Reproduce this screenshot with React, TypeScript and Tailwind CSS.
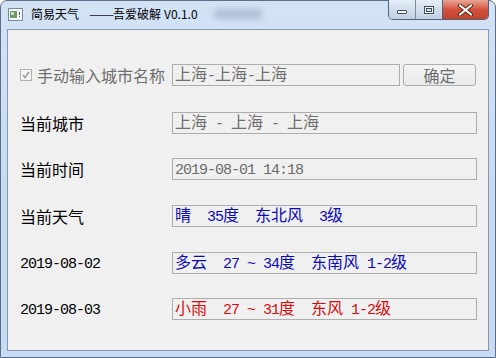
import React from "react";

const CJK = "font-['Noto_Sans_CJK_SC',sans-serif] text-[16px]";
const ASCII = "font-['Liberation_Mono',monospace] text-[15px] tracking-[-1px]";

// SimSun-style text: CJK runs full width, ASCII runs half width
function Mixed({ text }: { text: string }) {
  const parts = text.split(/([\x00-\x7f]+)/).filter((p) => p.length > 0);
  return (
    <span className="whitespace-pre">
      {parts.map((p, i) =>
        /^[\x00-\x7f]+$/.test(p) ? (
          <span key={i} className={ASCII}>
            {p}
          </span>
        ) : (
          <span key={i} className={CJK}>
            {p}
          </span>
        )
      )}
    </span>
  );
}

function Field({ text, color, width = "w-[305px]" }: { text: string; color: string; width?: string }) {
  return (
    <div
      className={`${width} shrink-0 h-full border border-[#adadad] bg-[#f0f0f0] pl-[2px] flex items-center leading-[20px] ${color}`}
    >
      <Mixed text={text} />
    </div>
  );
}

function Row({ label, children, className = "" }: { label: React.ReactNode; children: React.ReactNode; className?: string }) {
  return (
    <div className={`flex items-center h-[22px] ${className}`}>
      <div className="w-[164px] shrink-0 pl-[12px] flex items-center leading-[20px] text-black">{label}</div>
      {children}
    </div>
  );
}

function TitleIcon() {
  return (
    <svg width="15" height="13" viewBox="0 0 15 13">
      <rect x="0.5" y="0.5" width="14" height="12" fill="#f4f6f8" stroke="#7c8a98" />
      <rect x="2" y="3" width="7" height="7" fill="#6f9a6e" />
      <rect x="3" y="4" width="3" height="3" fill="#c9dcc4" />
      <rect x="11" y="4" width="1" height="3" fill="#556070" />
      <rect x="11" y="8" width="1" height="1" fill="#556070" />
    </svg>
  );
}

export default function App() {
  return (
    <div className="w-[496px] h-[358px] overflow-hidden bg-white">
      <div className="w-[496px] h-[358px] rounded-t-[7px] border border-[#5b6f8a] bg-gradient-to-b from-[#d3e3f6] via-[#c8dbf2] to-[#c8dbf2] flex flex-col">
        {/* title bar */}
        <div className="h-[28px] flex items-start relative">
          <div className="flex items-center pl-[7px] pt-[5px] font-['Noto_Sans_CJK_SC',sans-serif] text-[12px] leading-[16px] text-black">
            <TitleIcon />
            <span className="ml-[8px]">简易天气</span>
            <span className="ml-[10px] w-[24px] flex justify-start">
              <span className="inline-block origin-left scale-x-[1.25] tracking-[-1px]">——</span>
            </span>
            <span>吾爱破解</span>
            <span className="ml-[3px]">V0.1.0</span>
            <span className="ml-[15px] w-[50px] h-[10px] rounded-full bg-[#9fb2c8] blur-[3px] opacity-70" />
          </div>
          <div className="absolute right-[6px] top-[-1px] flex h-[20px] border border-t-0 border-[#4f6079] rounded-b-[5px] overflow-hidden">
            <div className="w-[27px] h-full bg-gradient-to-b from-[#e6eef8] via-[#d2deec] to-[#c1d1e4] border-r border-[#7b8ba0] flex items-center justify-center">
              <div className="w-[10px] h-[4px] mt-[5px] bg-white border border-[#3b4a5e] rounded-[1px]" />
            </div>
            <div className="w-[27px] h-full bg-gradient-to-b from-[#e6eef8] via-[#d2deec] to-[#c1d1e4] border-r border-[#4f6079] flex items-center justify-center">
              <div className="w-[10px] h-[8px] border border-[#3b4a5e] bg-white p-[1px]">
                <div className="w-full h-full border border-[#3b4a5e] bg-[#d6e0ec]" />
              </div>
            </div>
            <div className="w-[45px] h-full bg-gradient-to-b from-[#e9a595] via-[#d2503c] to-[#c2422c] flex items-center justify-center">
              <svg width="15" height="12" viewBox="0 0 15 12">
                <path d="M2 1.5 L13 10.5 M13 1.5 L2 10.5" stroke="#5a2418" strokeWidth="4" strokeLinecap="round" />
                <path d="M2 1.5 L13 10.5 M13 1.5 L2 10.5" stroke="#ffffff" strokeWidth="2.2" strokeLinecap="round" />
              </svg>
            </div>
          </div>
        </div>

        {/* client area */}
        <div className="mx-[6px] h-[322px] border border-[#8598b1] bg-[#f0f0f0] pt-[34px] flex flex-col">
          <Row
            label={
              <span className="flex items-center gap-[5px] text-[#6d6d6d]">
                <span className="w-[12px] h-[12px] border border-[#b1b1b1] bg-[#f4f4f4] flex items-center justify-center">
                  <svg width="8" height="8" viewBox="0 0 8 8">
                    <path d="M1 4 L3 6.5 L7 1" stroke="#9a9a9a" strokeWidth="1.5" fill="none" />
                  </svg>
                </span>
                <Mixed text="手动输入城市名称" />
              </span>
            }
          >
            <Field text="上海-上海-上海" color="text-[#6d6d6d]" width="w-[228px]" />
            <div className="ml-[3px] w-[73px] shrink-0 h-full border border-[#adadad] rounded-[3px] bg-gradient-to-b from-[#f4f4f4] to-[#eaeaea] flex items-center justify-center text-[#6d6d6d] leading-[20px]">
              <Mixed text="确定" />
            </div>
          </Row>
          <Row label={<Mixed text="当前城市" />} className="mt-[26px] h-[21px]">
            <Field text="上海 - 上海 - 上海" color="text-[#6d6d6d]" />
          </Row>
          <Row label={<Mixed text="当前时间" />} className="mt-[24px] h-[21px]">
            <Field text="2019-08-01 14:18" color="text-[#6d6d6d]" />
          </Row>
          <Row label={<Mixed text="当前天气" />} className="mt-[25px] h-[21px]">
            <Field text="晴  35度  东北风  3级" color="text-[#0a0ab8]" />
          </Row>
          <Row label={<Mixed text="2019-08-02" />} className="mt-[25px]">
            <Field text="多云  27 ~ 34度  东南风 1-2级" color="text-[#0a0ab8]" />
          </Row>
          <Row label={<Mixed text="2019-08-03" />} className="mt-[24px]">
            <Field text="小雨  27 ~ 31度  东风 1-2级" color="text-[#d80c0c]" />
          </Row>
        </div>
      </div>
    </div>
  );
}
